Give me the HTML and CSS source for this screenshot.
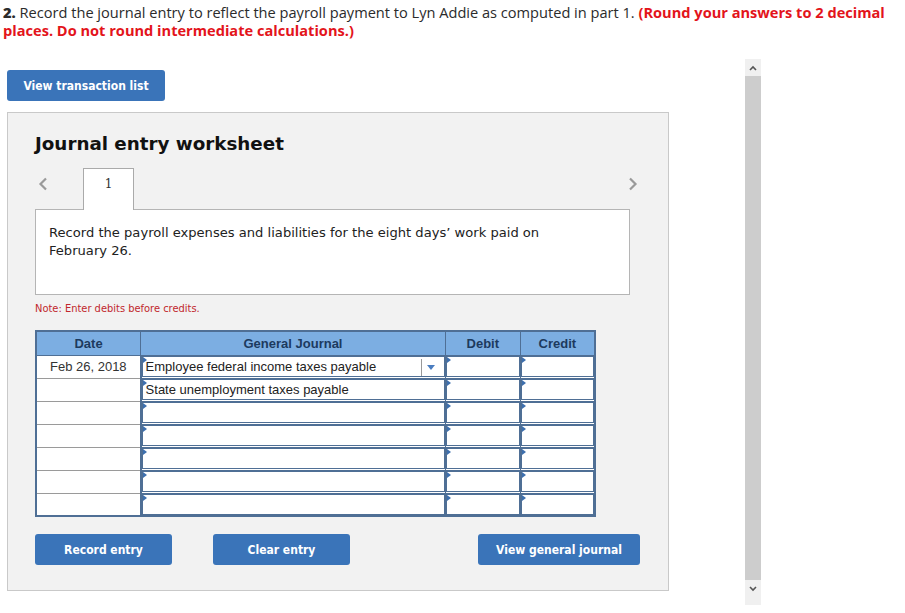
FILE: index.html
```html
<!DOCTYPE html>
<html lang="en">
<head>
    <meta charset="UTF-8" />
    <title>Journal entry worksheet</title>
    <link rel="stylesheet" href="styles.css">
</head>
<body>

<!-- Question text -->
<p class="question">
    <b>2.</b> Record the journal entry to reflect the payroll payment to Lyn Addie as computed in part 1.
    <span class="hint">(Round your answers to 2 decimal places. Do not round intermediate calculations.)</span>
</p>

<div class="frame">
    <div class="content">
        <button class="btn btn-list">View transaction list</button>

        <!-- Worksheet panel -->
        <div class="panel">
            <h2 class="panel-title">Journal entry worksheet</h2>

            <div class="tabs">
                <span class="chev chev-left">
                    <svg width="10" height="14" viewBox="0 0 10 14"><path d="M8 1.5 L2.5 7 L8 12.5" fill="none" stroke="#9a9a9a" stroke-width="2.2"/></svg>
                </span>
                <div class="tab">1</div>
                <span class="chev chev-right">
                    <svg width="10" height="14" viewBox="0 0 10 14"><path d="M2 1.5 L7.5 7 L2 12.5" fill="none" stroke="#9a9a9a" stroke-width="2.2"/></svg>
                </span>
            </div>

            <div class="instruction">
                Record the payroll expenses and liabilities for the eight days’ work paid on<br>
                February 26.
            </div>

            <p class="note">Note: Enter debits before credits.</p>

            <table class="journal">
                <thead>
                    <tr>
                        <th class="col-date">Date</th>
                        <th class="col-acct">General Journal</th>
                        <th class="col-amt">Debit</th>
                        <th class="col-amt">Credit</th>
                    </tr>
                </thead>
                <tbody>
                    <tr>
                        <td class="date">Feb 26, 2018</td>
                        <td class="field"><div class="input select"><span>Employee federal income taxes payable</span><i class="arrow"></i></div></td>
                        <td class="field"><div class="input"></div></td>
                        <td class="field"><div class="input"></div></td>
                    </tr>
                    <tr>
                        <td class="date"></td>
                        <td class="field"><div class="input">State unemployment taxes payable</div></td>
                        <td class="field"><div class="input"></div></td>
                        <td class="field"><div class="input"></div></td>
                    </tr>
                    <tr>
                        <td class="date"></td>
                        <td class="field"><div class="input"></div></td>
                        <td class="field"><div class="input"></div></td>
                        <td class="field"><div class="input"></div></td>
                    </tr>
                    <tr>
                        <td class="date"></td>
                        <td class="field"><div class="input"></div></td>
                        <td class="field"><div class="input"></div></td>
                        <td class="field"><div class="input"></div></td>
                    </tr>
                    <tr>
                        <td class="date"></td>
                        <td class="field"><div class="input"></div></td>
                        <td class="field"><div class="input"></div></td>
                        <td class="field"><div class="input"></div></td>
                    </tr>
                    <tr>
                        <td class="date"></td>
                        <td class="field"><div class="input"></div></td>
                        <td class="field"><div class="input"></div></td>
                        <td class="field"><div class="input"></div></td>
                    </tr>
                    <tr>
                        <td class="date"></td>
                        <td class="field"><div class="input"></div></td>
                        <td class="field"><div class="input"></div></td>
                        <td class="field"><div class="input"></div></td>
                    </tr>
                </tbody>
            </table>

            <div class="actions">
                <button class="btn btn-record">Record entry</button>
                <button class="btn btn-clear">Clear entry</button>
                <button class="btn btn-view">View general journal</button>
            </div>
        </div>
    </div>

    <!-- Fake scrollbar -->
    <div class="scrollbar">
        <div class="sb-btn">
            <svg width="8" height="6" viewBox="0 0 8 6"><path d="M1 5 L4 2 L7 5" fill="none" stroke="#555" stroke-width="1.6"/></svg>
        </div>
        <div class="sb-track"></div>
        <div class="sb-btn sb-down">
            <svg width="8" height="6" viewBox="0 0 8 6"><path d="M1 1 L4 4 L7 1" fill="none" stroke="#555" stroke-width="1.6"/></svg>
        </div>
    </div>
</div>

</body>
</html>
```

FILE: styles.css
```css
* {
  box-sizing: border-box;
}

body {
  margin: 0;
  background: #fff;
  color: #333;
  font-family: 'DejaVu Sans', Verdana, sans-serif;
}

.question {
  margin: 0;
  padding: 3px 4px 0 3px;
  font-family: 'Open Sans', Lato, sans-serif;
  font-size: 14.6px;
  line-height: 18px;
  color: #2b2b2b;
}

.question b {
  font-weight: 800;
}

.hint {
  color: #e3141b;
  font-weight: bold;
}

.frame {
  display: flex;
  margin-top: 20px;
}

.content {
  width: 745px;
  padding: 11px 0 0 7px;
}

.btn {
  display: inline-block;
  background: #3a74b9;
  color: #fff;
  border: none;
  border-radius: 3px;
  height: 31px;
  font-family: 'DejaVu Sans Condensed', 'DejaVu Sans', sans-serif;
  font-weight: bold;
  font-size: 12px;
  cursor: pointer;
}

.btn-list {
  width: 158px;
}

.panel {
  width: 662px;
  margin-top: 11px;
  background: #f2f2f2;
  border: 1px solid #c9c9c9;
  padding: 19px 38px 25px 27px;
}

.panel-title {
  margin: 0;
  font-size: 18.3px;
  line-height: 23px;
  font-weight: bold;
  color: #111;
}

.tabs {
  display: flex;
  align-items: flex-end;
  height: 41px;
  margin-top: 13px;
}

.chev {
  align-self: center;
  display: flex;
  margin-top: -10px;
}

.chev-left {
  margin-left: 3px;
}

.chev-right {
  margin-left: auto;
  margin-right: -8px;
}

.tab {
  width: 51px;
  height: 42px;
  margin-left: 35px;
  margin-bottom: -1px;
  background: #fff;
  border: 1px solid #aaa;
  border-bottom: none;
  text-align: center;
  padding-top: 8px;
  font-size: 12px;
  font-family: 'DejaVu Serif', serif;
  position: relative;
  z-index: 1;
}

.instruction {
  height: 86px;
  background: #fff;
  border: 1px solid #b5b5b5;
  padding: 14px 13px;
  font-size: 13.1px;
  line-height: 18px;
  color: #222;
}

.note {
  margin: 6px 0 0;
  font-family: 'DejaVu Sans Condensed', 'DejaVu Sans', sans-serif;
  font-size: 11px;
  line-height: 16px;
  color: #c1272d;
}

.journal {
  margin-top: 13px;
  width: 561px;
  border-collapse: collapse;
  border: 2px solid #4f6f95;
  background: #fff;
  font-family: 'Liberation Sans', Arial, sans-serif;
  font-size: 13px;
}

.journal th {
  background: #7caee2;
  color: #1c3a5e;
  font-weight: bold;
  height: 24px;
  padding: 0;
  border: 1px solid #4f6f95;
}

.col-date { width: 105px; }
.col-acct { width: 305px; }
.col-amt { width: 75px; }

.journal td {
  height: 23px;
  padding: 0;
}

.journal td.date {
  text-align: center;
  color: #333;
  border: 1px solid #9a9a9a;
  border-right: 2px solid #4f6f95;
}

.journal td.field {
  border: 1px solid #4f6f95;
}

.input {
  position: relative;
  height: 21px;
  border: 1px solid #4f6f95;
  padding: 1px 3px 0;
  line-height: 18px;
  color: #222;
  white-space: nowrap;
  overflow: hidden;
}

.input::before {
  content: "";
  position: absolute;
  left: 0;
  top: 0;
  border-top: 3px solid transparent;
  border-bottom: 3px solid transparent;
  border-left: 4px solid #3d6fae;
}

.select {
  display: flex;
  align-items: center;
}

.select span {
  flex: 1;
}

.arrow {
  width: 20px;
  height: 17px;
  border-left: 1px solid #999;
  display: flex;
  align-items: center;
  justify-content: center;
}

.arrow::after {
  content: "";
  border-left: 4px solid transparent;
  border-right: 4px solid transparent;
  border-top: 5px solid #4a7dc0;
}

.actions {
  display: flex;
  margin-top: 17px;
  margin-right: -10px;
}

.btn-record,
.btn-clear {
  width: 137px;
}

.btn-clear {
  margin-left: 41px;
}

.btn-view {
  width: 162px;
  margin-left: auto;
}

.scrollbar {
  width: 16px;
  height: 546px;
  display: flex;
  flex-direction: column;
  background: #f0f0f0;
}

.sb-btn {
  height: 17px;
  display: flex;
  align-items: center;
  justify-content: center;
}

.sb-down {
  height: 25px;
  align-items: flex-start;
  padding-top: 6px;
}

.sb-track {
  flex: 1;
  background: #cdcdcd;
}
```
